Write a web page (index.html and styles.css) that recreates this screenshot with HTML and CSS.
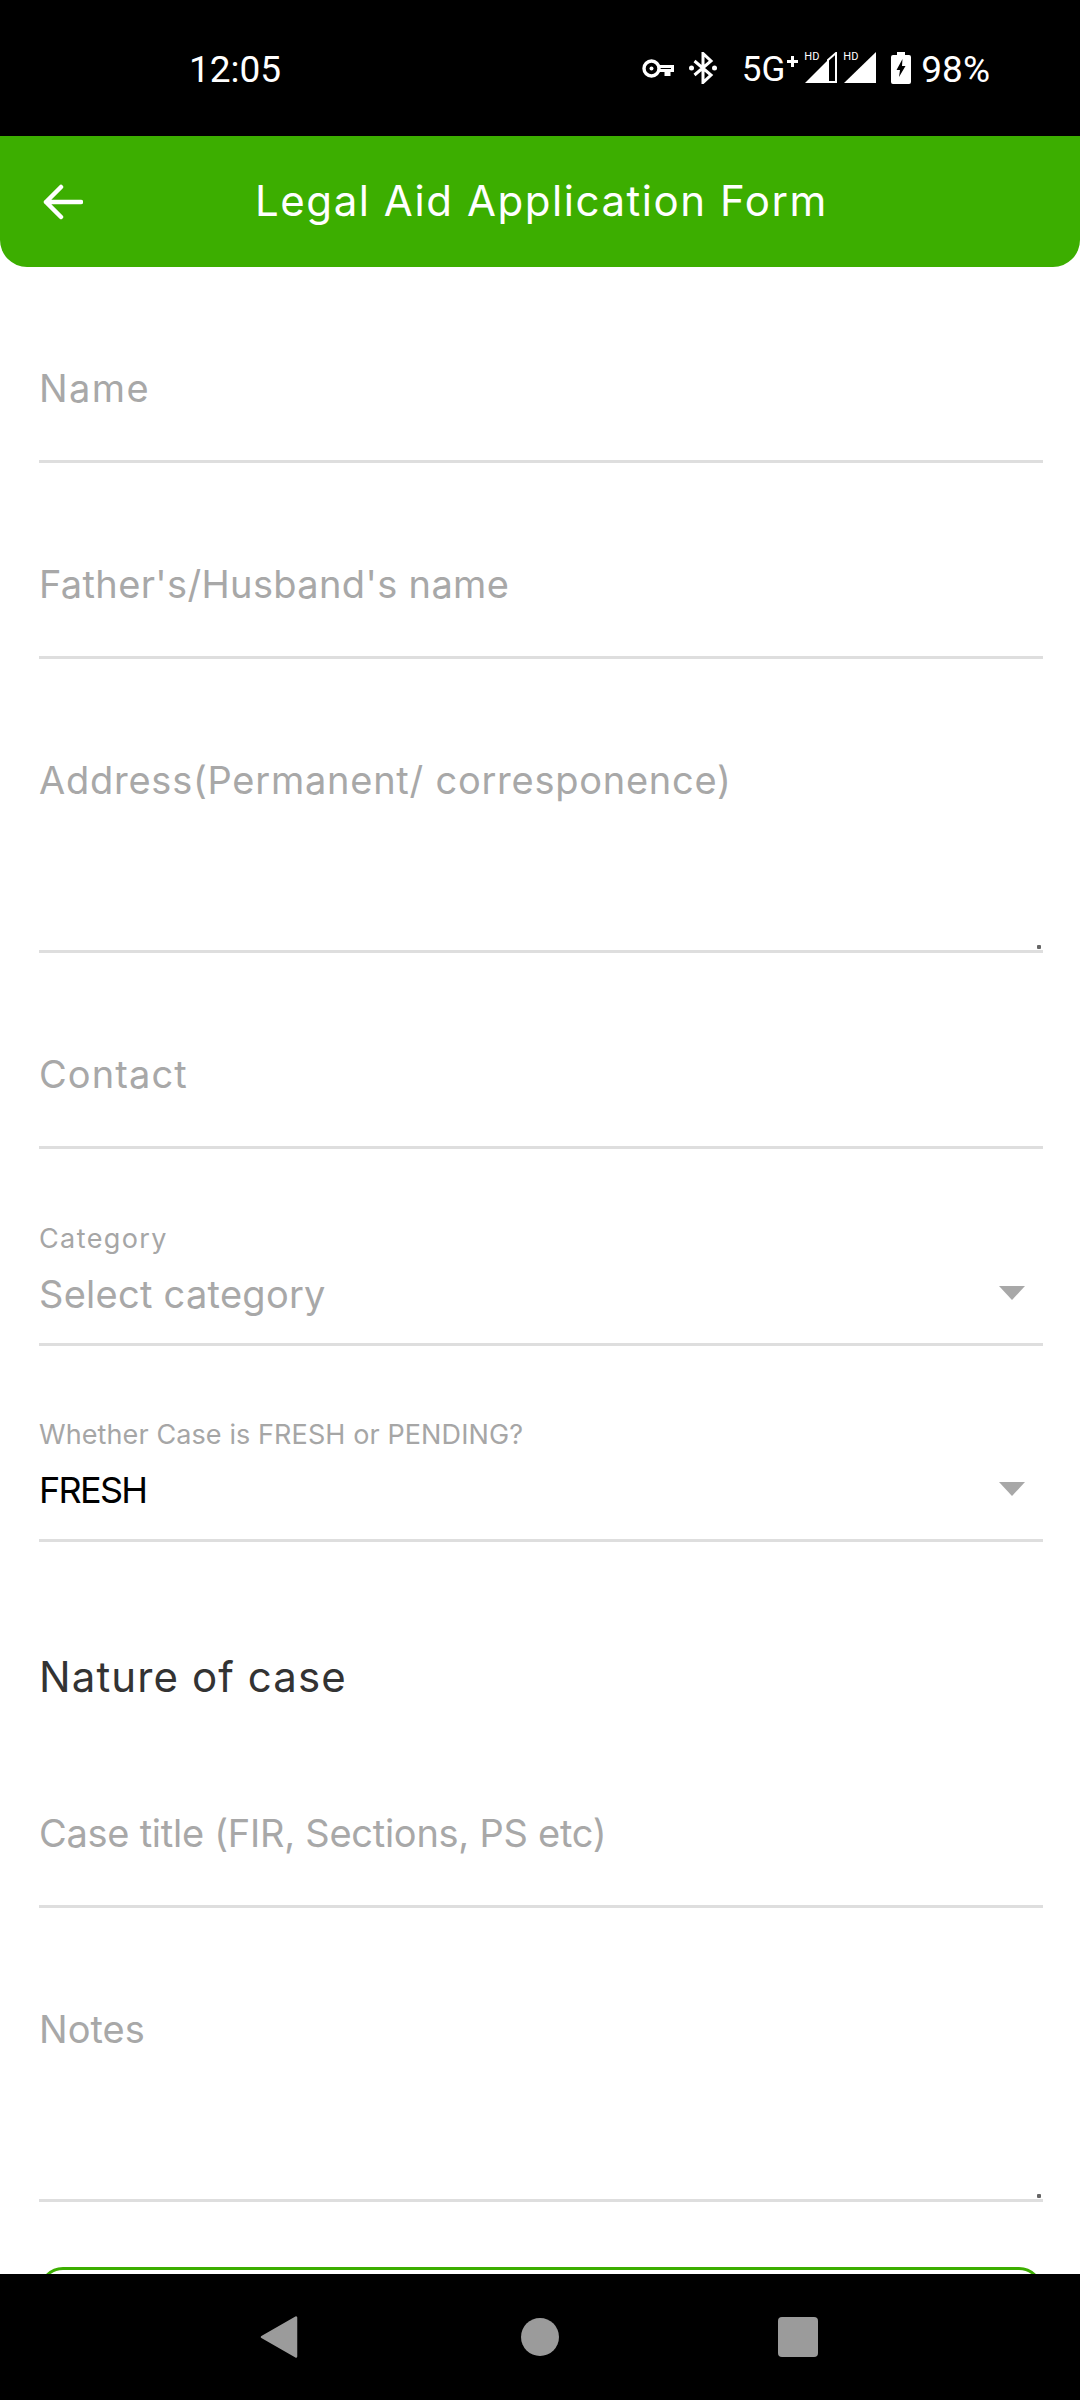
FILE: index.html
```html
<!DOCTYPE html>
<html lang="en">
<head>
<meta charset="utf-8">
<title>Legal Aid Application Form</title>
<link rel="stylesheet" href="styles.css">
</head>
<body>
<div class="app">
  <div class="statusbar">
    <span class="time">12:05</span>
    <div class="status-icons">
      <svg class="ic-key" width="32" height="19" viewBox="0 0 32 19"><circle cx="9.500" cy="9.500" r="7.500" fill="none" stroke="#fff" stroke-width="3.400"/><circle cx="9.500" cy="9.500" r="2" fill="#fff"/><path d="M16.500 7.500H30.500V11.500H27V15.500H24V11.500H16.500" fill="none" stroke="#fff" stroke-width="3"/></svg>
      <svg class="ic-bt" width="28" height="32" viewBox="0 0 28 32"><path d="M5.500 9 22 23 14 30.500V1.500L22 9 5.500 23" fill="none" stroke="#fff" stroke-width="3"/><circle cx="2.500" cy="16" r="2.500" fill="#fff"/><circle cx="25.500" cy="16" r="2.500" fill="#fff"/></svg>
      <span class="net">5G</span>
      <svg class="ic-plus" width="11" height="11" viewBox="0 0 11 11"><path d="M5.500 0v11M0 5.500h11" stroke="#fff" stroke-width="3"/></svg>
      <div class="signal one">
        <span class="hd">HD</span>
        <svg width="32" height="31" viewBox="0 0 32 31"><path d="M0 31 22 9V31z" fill="#fff"/><path d="M23 8 31 1V30H23z" fill="none" stroke="#fff" stroke-width="2"/></svg>
      </div>
      <div class="signal two">
        <span class="hd">HD</span>
        <svg width="32" height="31" viewBox="0 0 32 31"><path d="M0 31 32 0V31z" fill="#fff"/></svg>
      </div>
      <svg class="ic-batt" width="20" height="32" viewBox="0 0 20 32"><path d="M6 0h8v3h4a2 2 0 0 1 2 2v25a2 2 0 0 1-2 2H2a2 2 0 0 1-2-2V5a2 2 0 0 1 2-2h4z" fill="#fff"/><path d="M11.500 7 5.500 18H9l-1 7 6.500-11H11z" fill="#000"/></svg>
      <span class="pct">98%</span>
    </div>
  </div>

  <header class="appbar">
    <svg class="back" width="40" height="36" viewBox="0 0 40 36"><path d="M38 18H3M18 3 3 18l15 15" fill="none" stroke="#fff" stroke-width="4.500" stroke-linecap="round" stroke-linejoin="round"/></svg>
    <h1 class="title">Legal Aid Application Form</h1>
  </header>

  <main class="form">
    <div class="field"><span class="ph t-name">Name</span></div>
    <div class="field"><span class="ph t-father">Father's/Husband's name</span></div>
    <div class="field multi"><span class="ph t-address">Address(Permanent/ corresponence)</span><i class="grip"></i></div>
    <div class="field"><span class="ph t-contact">Contact</span></div>
    <div class="field select tall">
      <span class="lbl t-cat">Category</span>
      <div class="select-row"><span class="ph t-select">Select category</span><i class="caret"></i></div>
    </div>
    <div class="field select">
      <span class="lbl t-whether">Whether Case is FRESH or PENDING?</span>
      <div class="select-row"><span class="val">FRESH</span><i class="caret"></i></div>
    </div>
    <h2 class="section">Nature of case</h2>
    <div class="field"><span class="ph t-case">Case title (FIR, Sections, PS etc)</span></div>
    <div class="field multi"><span class="ph t-notes">Notes</span><i class="grip"></i></div>
    <div class="submit"></div>
  </main>

  <nav class="navbar">
    <svg width="38" height="42" viewBox="0 0 38 42"><path d="M36 1.500V40.500L2 21z" fill="#9b9b9b" stroke="#9b9b9b" stroke-width="2.500" stroke-linejoin="round"/></svg>
    <span class="nav-circle"></span>
    <span class="nav-square"></span>
  </nav>
</div>
</body>
</html>
```

FILE: styles.css
```css
* { box-sizing: border-box; }
html, body { margin: 0; padding: 0; background: #fff; }
.app {
  width: 1080px; height: 2400px; display: flex; flex-direction: column;
  overflow: hidden; font-family: Inter, "Liberation Sans", sans-serif;
}
.statusbar {
  height: 136px; background: #000; color: #fff; flex: none;
  display: flex; align-items: center; padding: 0 90px 0 189px;
  justify-content: space-between; font-family: Roboto, sans-serif; font-size: 37px;
}
.time { line-height: 1; margin-top: 2px; }
.status-icons { display: flex; align-items: center; height: 40px; }
.status-icons svg { display: block; flex: none; }
.ic-key { margin-right: 15px; }
.ic-bt { margin-right: 25px; }
.net { line-height: 1; margin-top: 2px; font-size: 35px; }
.ic-plus { margin: -14px 7px 0 2px; }
.signal { position: relative; width: 32px; height: 32px; margin-right: 7px; }
.signal svg { position: absolute; left: 0; top: 0; }
.signal.two { margin-right: 15px; }
.hd {
  position: absolute; left: -1px; top: 0; font-size: 11px; line-height: 9px; color: #fff;
}
.ic-batt { margin-right: 10px; }
.pct { line-height: 1; margin-top: 2px; }

.appbar {
  height: 131px; background: #3cae00; flex: none; position: relative;
  border-radius: 0 0 27px 27px; display: flex; align-items: center;
  padding-left: 43px;
}
.title {
  margin: 0 0 0 172px; font-size: 42px; font-weight: 400; color: #fff;
  letter-spacing: 1.55px; white-space: nowrap; line-height: 60px; position: relative; top: -1px;
}
.form {
  flex: 1; min-height: 0; overflow: hidden; background: #fff;
  padding: 0 37px 0 39px;
}
.field {
  position: relative; display: flex; flex-direction: column; justify-content: flex-end;
  height: 196px; padding-bottom: 42px; border-bottom: 3px solid #dedede;
}
.field.multi { height: 294px; padding-bottom: 140px; }
.field.select { padding-bottom: 19px; }
.field.tall { height: 197px; }
.ph { font-size: 38px; line-height: 60px; color: #a8a8a8; white-space: nowrap; }
.val { font-size: 36px; line-height: 60px; color: #000; letter-spacing: -1.7px; white-space: nowrap; }
.lbl { font-size: 27px; line-height: 46px; margin-bottom: 2px; color: #a6a6a6; white-space: nowrap; }
.t-name { letter-spacing: 1.4px; }
.t-father { letter-spacing: 0.35px; }
.t-address { letter-spacing: 0.75px; }
.t-contact { letter-spacing: 1.1px; }
.t-select { letter-spacing: 0.27px; }
.t-case { letter-spacing: -0.26px; }
.t-cat { letter-spacing: 1.4px; }
.t-whether { letter-spacing: 0.1px; }
.select-row { display: flex; justify-content: space-between; align-items: center; height: 60px; }
.caret {
  width: 0; height: 0; margin-right: 18px; margin-top: -2px;
  border-left: 13px solid transparent; border-right: 13px solid transparent;
  border-top: 14px solid #a8a8a8;
}
.grip {
  position: absolute; right: 2px; bottom: 1px; width: 4px; height: 4px;
  background: #666; border-radius: 1px;
}
.section {
  margin: 0; padding: 105px 0 5px; font-size: 42px; line-height: 60px;
  font-weight: 400; color: #333; letter-spacing: 1.1px;
}
.submit {
  margin-top: 65px; height: 130px; border: 3px solid #3cae00; border-radius: 24px;
}
.navbar {
  height: 126px; background: #000; flex: none; position: relative;
  display: flex; align-items: center; justify-content: space-between;
  padding: 0 262px 0 260px;
}
.nav-circle { width: 38px; height: 38px; margin-left: 4px; border-radius: 50%; background: #9b9b9b; }
.nav-square { width: 40px; height: 40px; border-radius: 4px; background: #9b9b9b; }
```
